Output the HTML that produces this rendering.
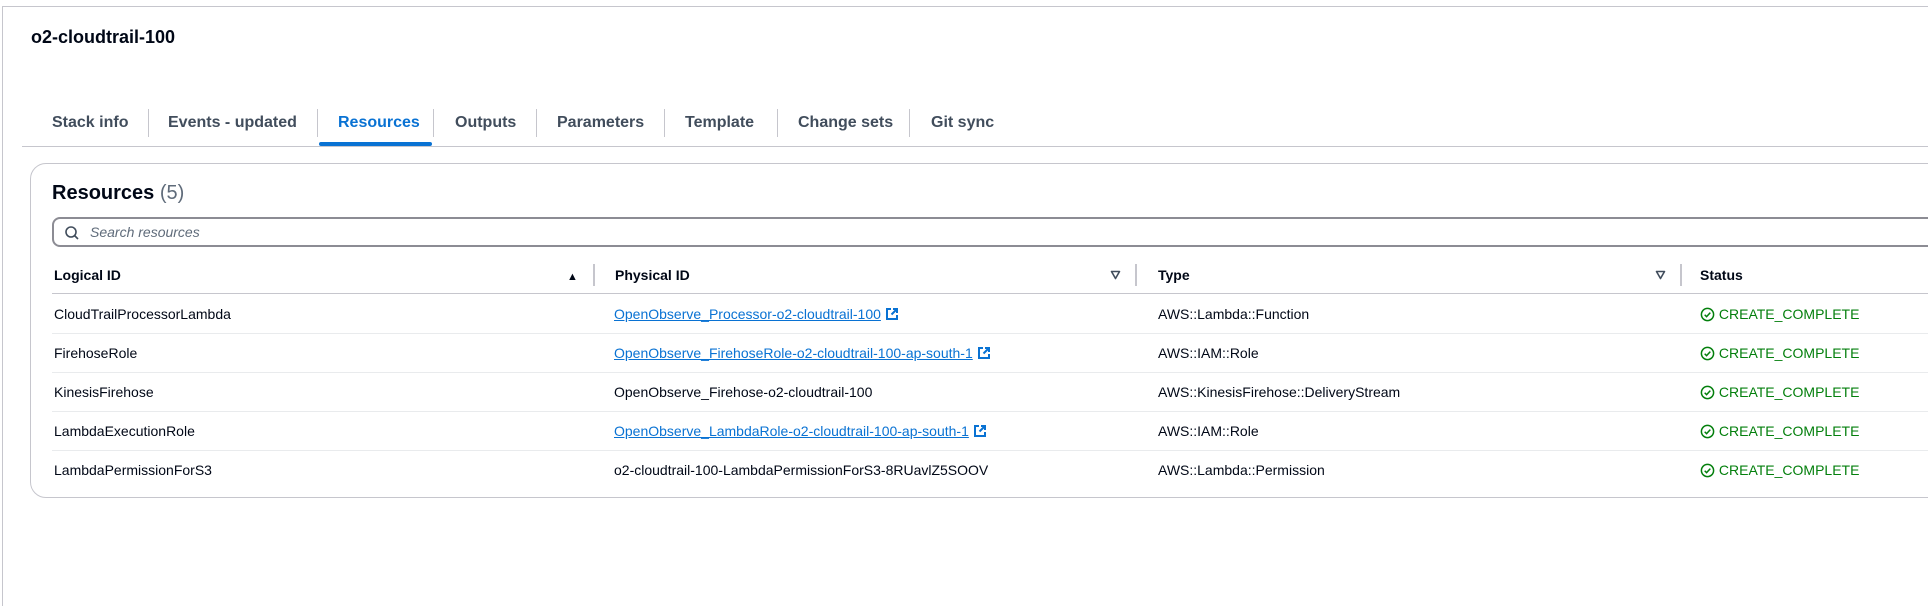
<!DOCTYPE html>
<html><head><meta charset="utf-8"><style>
*{box-sizing:border-box;margin:0;padding:0}
body{width:1928px;height:565px;overflow:hidden;background:#fff;font-family:"Liberation Sans",sans-serif;color:#000716;position:relative}
.frame{position:absolute;left:2px;top:6px;width:1940px;height:600px;border-left:1px solid #c6c6cd;border-top:1px solid #c6c6cd}
.abs{position:absolute;white-space:nowrap}
.title{left:31px;top:26px;font-size:18px;font-weight:bold;line-height:22px}
.tab{top:113px;font-size:16px;font-weight:bold;color:#414d5c;line-height:20px}
.sep{top:109px;width:1px;height:28px;background:#c6c6cd}
.tabline{left:22px;top:146px;width:1910px;height:1px;background:#c6c6cd}
.ul{left:319px;top:142px;width:113px;height:4px;background:#0972d3;border-radius:2px}
.card{left:30px;top:163px;width:1950px;height:335px;border:1px solid #c6c6cd;border-radius:16px}
.h2{left:52px;top:181px;font-size:20px;font-weight:bold;line-height:24px}
.h2 span{font-weight:normal;color:#5f6b7a}
.search{left:52px;top:217px;width:1900px;height:30px;border:2px solid #8c8c94;border-radius:8px}
.search span{position:absolute;left:36px;top:5px;font-style:italic;color:#5f6b7a;font-size:14px}
.th{top:267px;font-size:14px;font-weight:bold;line-height:17px}
.hsep{top:264px;width:2px;height:22px;background:#c6c6cd}
.hl{left:52px;width:1890px;height:1px;background:#e9ebed}
.td{font-size:14px;line-height:17px}
a{color:#0972d3;text-decoration:underline}
.ok{color:#037f0c}
</style></head><body>
<div class="frame"></div>
<div class="abs title">o2-cloudtrail-100</div>
<div class="abs tab" style="left:52px">Stack info</div>
<div class="abs sep" style="left:148px"></div>
<div class="abs tab" style="left:168px">Events - updated</div>
<div class="abs sep" style="left:317px"></div>
<div class="abs tab" style="left:338px;color:#0972d3">Resources</div>
<div class="abs sep" style="left:433px"></div>
<div class="abs tab" style="left:455px">Outputs</div>
<div class="abs sep" style="left:536px"></div>
<div class="abs tab" style="left:557px">Parameters</div>
<div class="abs sep" style="left:664px"></div>
<div class="abs tab" style="left:685px">Template</div>
<div class="abs sep" style="left:777px"></div>
<div class="abs tab" style="left:798px">Change sets</div>
<div class="abs sep" style="left:909px"></div>
<div class="abs tab" style="left:931px">Git sync</div>
<div class="abs tabline"></div>
<div class="abs ul"></div>
<div class="abs card"></div>
<div class="abs h2">Resources <span>(5)</span></div>
<div class="abs search"><svg style="position:absolute;left:10px;top:6px" width="16" height="16" viewBox="0 0 16 16"><circle cx="7" cy="7" r="5" fill="none" stroke="#414d5c" stroke-width="1.6"/><path d="M10.5 10.5L14 14" stroke="#414d5c" stroke-width="1.6"/></svg><span>Search resources</span></div>
<div class="abs th" style="left:54px">Logical ID</div>
<div class="abs th" style="left:567px;font-size:11px;top:269px">▲</div>
<div class="abs hsep" style="left:593px"></div>
<div class="abs th" style="left:615px">Physical ID</div>
<svg class="abs" style="left:1110px;top:270px" width="11" height="10" viewBox="0 0 11 10"><path d="M1.5 1.5h8L5.5 8.5z" fill="none" stroke="#414d5c" stroke-width="1.6" stroke-linejoin="round"/></svg>
<div class="abs hsep" style="left:1135px"></div>
<div class="abs th" style="left:1158px">Type</div>
<svg class="abs" style="left:1655px;top:270px" width="11" height="10" viewBox="0 0 11 10"><path d="M1.5 1.5h8L5.5 8.5z" fill="none" stroke="#414d5c" stroke-width="1.6" stroke-linejoin="round"/></svg>
<div class="abs hsep" style="left:1680px"></div>
<div class="abs th" style="left:1700px">Status</div>
<div class="abs hl" style="top:293px;background:#c6c6cd"></div>
<div class="abs hl" style="top:333px"></div>
<div class="abs hl" style="top:372px"></div>
<div class="abs hl" style="top:411px"></div>
<div class="abs hl" style="top:450px"></div>

<div class="abs td" style="left:54px;top:306px">CloudTrailProcessorLambda</div>
<div class="abs td" style="left:614px;top:306px"><a>OpenObserve_Processor-o2-cloudtrail-100</a> <svg width="14" height="14" viewBox="0 0 14 14" style="vertical-align:-2px"><path d="M6 2H2v10h10V8M8 2h4v4M12 2L6.5 7.5" fill="none" stroke="#0972d3" stroke-width="2"/></svg></div>
<div class="abs td" style="left:1158px;top:306px">AWS::Lambda::Function</div>

<div class="abs td" style="left:54px;top:345px">FirehoseRole</div>
<div class="abs td" style="left:614px;top:345px"><a>OpenObserve_FirehoseRole-o2-cloudtrail-100-ap-south-1</a> <svg width="14" height="14" viewBox="0 0 14 14" style="vertical-align:-2px"><path d="M6 2H2v10h10V8M8 2h4v4M12 2L6.5 7.5" fill="none" stroke="#0972d3" stroke-width="2"/></svg></div>
<div class="abs td" style="left:1158px;top:345px">AWS::IAM::Role</div>

<div class="abs td" style="left:54px;top:384px">KinesisFirehose</div>
<div class="abs td" style="left:614px;top:384px">OpenObserve_Firehose-o2-cloudtrail-100</div>
<div class="abs td" style="left:1158px;top:384px">AWS::KinesisFirehose::DeliveryStream</div>

<div class="abs td" style="left:54px;top:423px">LambdaExecutionRole</div>
<div class="abs td" style="left:614px;top:423px"><a>OpenObserve_LambdaRole-o2-cloudtrail-100-ap-south-1</a> <svg width="14" height="14" viewBox="0 0 14 14" style="vertical-align:-2px"><path d="M6 2H2v10h10V8M8 2h4v4M12 2L6.5 7.5" fill="none" stroke="#0972d3" stroke-width="2"/></svg></div>
<div class="abs td" style="left:1158px;top:423px">AWS::IAM::Role</div>

<div class="abs td" style="left:54px;top:462px">LambdaPermissionForS3</div>
<div class="abs td" style="left:614px;top:462px">o2-cloudtrail-100-LambdaPermissionForS3-8RUavlZ5SOOV</div>
<div class="abs td" style="left:1158px;top:462px">AWS::Lambda::Permission</div>

<div class="abs td ok" style="left:1700px;top:306px"><svg width="15" height="15" viewBox="0 0 16 16" style="vertical-align:-3px"><circle cx="8" cy="8" r="6.5" fill="none" stroke="#037f0c" stroke-width="1.6"/><path d="M5 8.3l2 2 4-4.3" fill="none" stroke="#037f0c" stroke-width="1.6"/></svg> CREATE_COMPLETE</div>
<div class="abs td ok" style="left:1700px;top:345px"><svg width="15" height="15" viewBox="0 0 16 16" style="vertical-align:-3px"><circle cx="8" cy="8" r="6.5" fill="none" stroke="#037f0c" stroke-width="1.6"/><path d="M5 8.3l2 2 4-4.3" fill="none" stroke="#037f0c" stroke-width="1.6"/></svg> CREATE_COMPLETE</div>
<div class="abs td ok" style="left:1700px;top:384px"><svg width="15" height="15" viewBox="0 0 16 16" style="vertical-align:-3px"><circle cx="8" cy="8" r="6.5" fill="none" stroke="#037f0c" stroke-width="1.6"/><path d="M5 8.3l2 2 4-4.3" fill="none" stroke="#037f0c" stroke-width="1.6"/></svg> CREATE_COMPLETE</div>
<div class="abs td ok" style="left:1700px;top:423px"><svg width="15" height="15" viewBox="0 0 16 16" style="vertical-align:-3px"><circle cx="8" cy="8" r="6.5" fill="none" stroke="#037f0c" stroke-width="1.6"/><path d="M5 8.3l2 2 4-4.3" fill="none" stroke="#037f0c" stroke-width="1.6"/></svg> CREATE_COMPLETE</div>
<div class="abs td ok" style="left:1700px;top:462px"><svg width="15" height="15" viewBox="0 0 16 16" style="vertical-align:-3px"><circle cx="8" cy="8" r="6.5" fill="none" stroke="#037f0c" stroke-width="1.6"/><path d="M5 8.3l2 2 4-4.3" fill="none" stroke="#037f0c" stroke-width="1.6"/></svg> CREATE_COMPLETE</div>
</body></html>
